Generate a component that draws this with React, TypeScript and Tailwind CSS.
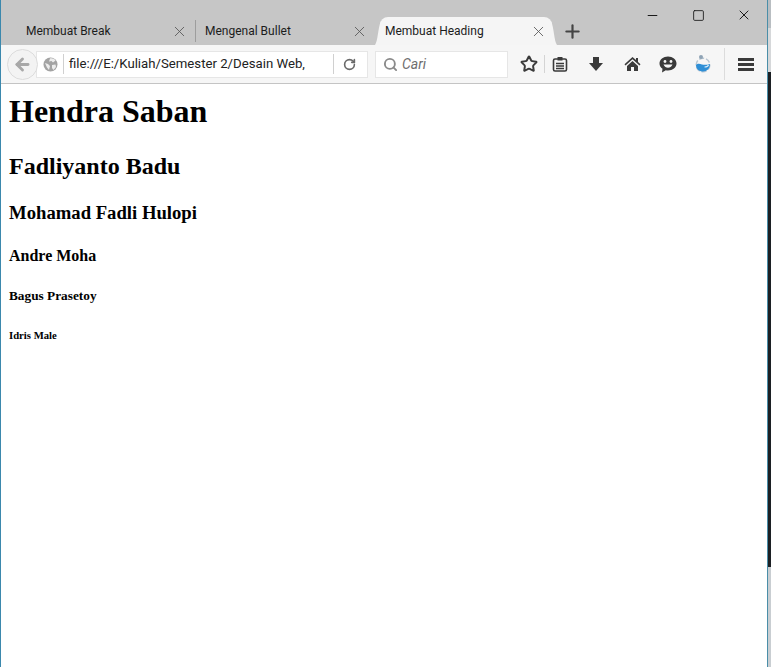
import { ArrowLeft, Minus, Plus, RotateCw, Search, Square, Star, X } from "lucide-react";

const ui = "font-['Roboto','Noto_Sans',sans-serif]";

function Clipboard() {
  return (
    <svg width="16" height="16" viewBox="0 0 16 16" fill="none">
      <rect x="1.500" y="3" width="13" height="12" rx="1.500" stroke="#3a3a3a" strokeWidth="1.600" />
      <rect x="5.500" y="1" width="5" height="3.500" fill="#3a3a3a" />
      <path d="M4 7.500h8M4 10h8M4 12.500h8" stroke="#3a3a3a" strokeWidth="1.300" />
    </svg>
  );
}

function Download() {
  return (
    <svg width="16" height="16" viewBox="0 0 16 16">
      <path d="M5 1h6v6h4l-7 8-7-8h4z" fill="#3a3a3a" />
    </svg>
  );
}

function Home() {
  return (
    <svg width="17" height="16" viewBox="0 0 17 16">
      <path d="M8.500 1L0.500 8.200l1 1.200 7-6.200 7 6.200 1-1.200-2.500-2.300V2h-2v2.100z" fill="#3a3a3a" />
      <path d="M3 10l5.500-5 5.500 5v5h-4v-4H7v4H3z" fill="#3a3a3a" />
    </svg>
  );
}

function Smile() {
  return (
    <svg width="18" height="17" viewBox="0 0 18 17">
      <path d="M9 0.500c4.700 0 8.500 3 8.500 7s-3.800 7-8.500 7c-.8 0-1.500-.1-2.200-.2L3 16.500l.5-3.700C1.600 11.500.5 9.600.5 7.500c0-4 3.800-7 8.500-7z" fill="#3a3a3a" />
      <circle cx="6" cy="5.500" r="1.400" fill="#f5f5f5" />
      <circle cx="12" cy="5.500" r="1.400" fill="#f5f5f5" />
      <path d="M4.500 8.500c1 2.200 2.600 3.200 4.500 3.200s3.500-1 4.500-3.200z" fill="#f5f5f5" />
    </svg>
  );
}

function Sync() {
  return (
    <svg width="16" height="20" viewBox="0 0 16 20" fill="none">
      <circle cx="8" cy="11" r="6.800" stroke="#b9c6d2" strokeWidth="1.500" strokeDasharray="5 2" />
      <path d="M1 11c2-2 4-1 6-.5s5 .5 8-.5c0 4.500-3 7.500-7 7.500S1 15 1 11z" fill="#2f8fd6" />
      <path d="M9.500 13c2 0 3.500-.7 4-2" stroke="#d8ecfa" strokeWidth="1.200" />
      <circle cx="6" cy="3" r="2" fill="#8fa3b5" />
    </svg>
  );
}

function Globe() {
  return (
    <svg width="15" height="15" viewBox="0 0 15 15">
      <circle cx="7.500" cy="7.500" r="7" fill="#a3a3a3" />
      <path d="M7 1.500c2-.5 4.500.5 5.500 2L10 5.500 8.500 4 6 4.500zM9 8l3.500-.5.5 2.500-2.500 3L9 11zM2 6l3 1 2 2-1 4-2-2.500z" fill="#ececec" />
    </svg>
  );
}

function Menu() {
  return (
    <div className="flex w-[16px] flex-col gap-[2px]">
      <div className="h-[3px] bg-[#3a3a3a]" />
      <div className="h-[3px] bg-[#3a3a3a]" />
      <div className="h-[3px] bg-[#3a3a3a]" />
    </div>
  );
}

function Tab({ title, className }: { title: string; className: string }) {
  return (
    <div className={`flex h-[28px] items-center ${className}`}>
      <span className="flex-1 text-[12px] text-[#1c1c1c]">{title}</span>
      <X className="h-[17px] w-[17px] text-[#555555]" strokeWidth={1.2} />
    </div>
  );
}

function ActiveTab() {
  return (
    <div className="relative ml-[12px] flex h-[28px] w-[172px] items-center rounded-t-[8px] bg-[#f5f5f5] pl-[5px] pr-[5px]">
      <svg className="absolute bottom-0 left-[-5px]" width="6" height="24" viewBox="0 0 6 24">
        <path d="M6 0C3 6 3 20 0 24h6z" fill="#f5f5f5" />
      </svg>
      <span className="flex-1 text-[12px] text-[#1c1c1c]">Membuat Heading</span>
      <X className="h-[17px] w-[17px] text-[#555555]" strokeWidth={1.2} />
      <svg className="absolute bottom-0 right-[-5px]" width="6" height="24" viewBox="0 0 6 24">
        <path d="M0 0C3 6 3 20 6 24H0z" fill="#f5f5f5" />
      </svg>
    </div>
  );
}

function TabStrip() {
  return (
    <div className="flex h-[45px] bg-[#c6c6c6]">
      <div className="flex flex-1 items-end">
        <Tab title="Membuat Break" className="w-[194px] pl-[25px] pr-[7px]" />
        <div className="mb-[3px] h-[22px] w-[1px] bg-[#9d9d9d]" />
        <Tab title="Mengenal Bullet" className="w-[172px] pl-[9px]" />
        <ActiveTab />
        <div className="flex h-[28px] w-[41px] items-center justify-center">
          <Plus className="h-[21px] w-[21px] text-[#444444]" strokeWidth={2.500} />
        </div>
      </div>
      <div className="flex h-[30px] text-[#1a1a1a]">
        <div className="flex w-[46px] items-center justify-center">
          <Minus className="h-[15px] w-[15px]" strokeWidth={1.600} />
        </div>
        <div className="flex w-[46px] items-center justify-center">
          <Square className="h-[13px] w-[13px]" strokeWidth={1.600} />
        </div>
        <div className="flex w-[46px] items-center justify-center">
          <X className="h-[16px] w-[16px]" strokeWidth={1.500} />
        </div>
      </div>
    </div>
  );
}

function Toolbar() {
  return (
    <div className="flex h-[39px] items-center border-b border-[#c4c4c4] bg-[#f6f6f6]">
      <div className="z-10 ml-[6px] flex h-[31px] w-[31px] items-center justify-center rounded-full border border-[#dcdcdc] bg-[#f3f3f3]">
        <ArrowLeft className="h-[19px] w-[19px] text-[#a8a8a8]" strokeWidth={3.600} />
      </div>
      <div className="-ml-[2px] flex h-[27px] w-[332px] items-center border border-[#e6e6e6] bg-white">
        <div className="ml-[6px] flex w-[20px] items-center">
          <Globe />
        </div>
        <div className="h-[20px] w-[1px] bg-[#d0d0d0]" />
        <div className="w-[269px] overflow-hidden whitespace-nowrap pl-[5px] text-[13.200px] text-[#222222]">file:///E:/Kuliah/Semester 2/Desain Web,</div>
        <div className="h-[20px] w-[1px] bg-[#d0d0d0]" />
        <div className="flex flex-1 items-center justify-center pr-[3px]">
          <RotateCw className="h-[13px] w-[13px] text-[#6a6a6a]" strokeWidth={3} />
        </div>
      </div>
      <div className="ml-[7px] flex h-[27px] w-[133px] items-center gap-[4px] border border-[#e6e6e6] bg-white pl-[7px]">
        <Search className="h-[15px] w-[15px] text-[#8a8a8a]" strokeWidth={3} />
        <span className="text-[14px] italic text-[#6d6d6d]">Cari</span>
      </div>
      <div className="flex w-[36px] justify-end pr-[6px]">
        <Star className="h-[18px] w-[18px] text-[#3a3a3a]" strokeWidth={2.600} />
      </div>
      <div className="h-[18px] w-[1px] bg-[#d4d4d4]" />
      <div className="flex w-[29px] justify-center">
        <Clipboard />
      </div>
      <div className="flex w-[36px] justify-center pl-[8px]">
        <Download />
      </div>
      <div className="flex w-[36px] justify-center pl-[8px]">
        <Home />
      </div>
      <div className="flex w-[36px] justify-center pl-[8px]">
        <Smile />
      </div>
      <div className="flex w-[36px] justify-center pl-[6px]">
        <Sync />
      </div>
      <div className="ml-[6px] h-[32px] w-[1px] bg-[#dcdcdc]" />
      <div className="flex flex-1 justify-center">
        <Menu />
      </div>
    </div>
  );
}

function Page() {
  return (
    <div className="flex-1 bg-white pl-[8px] font-['Liberation_Serif',serif] font-bold text-black">
      <h1 className="pt-[9px] text-[32px] leading-[37px]">Hendra Saban</h1>
      <h2 className="mt-[22px] text-[24px] leading-[28px]">Fadliyanto Badu</h2>
      <h3 className="mt-[22px] text-[18.700px] leading-[22px]">Mohamad Fadli Hulopi</h3>
      <h4 className="mt-[23px] text-[16px] leading-[18px]">Andre Moha</h4>
      <h5 className="mt-[23px] text-[13.300px] leading-[15px]">Bagus Prasetoy</h5>
      <h6 className="mt-[26px] text-[10.700px] leading-[12px]">Idris Male</h6>
    </div>
  );
}

export default function App() {
  return (
    <div className={`${ui} flex h-[667px] w-[771px] overflow-hidden bg-white`}>
      <div className="w-[1px] bg-[#3b88ad]" />
      <div className="flex w-[766px] flex-col">
        <TabStrip />
        <Toolbar />
        <Page />
      </div>
      <div className="w-[1px] bg-[#4a8ea8]" />
      <div className="flex flex-1 flex-col">
        <div className="h-[28px] bg-[#b9bec2]" />
        <div className="h-[44px] bg-[#d6d8da]" />
        <div className="h-[495px] bg-[#1c2024]" />
        <div className="flex-1 bg-[#c9ced2]" />
      </div>
    </div>
  );
}
